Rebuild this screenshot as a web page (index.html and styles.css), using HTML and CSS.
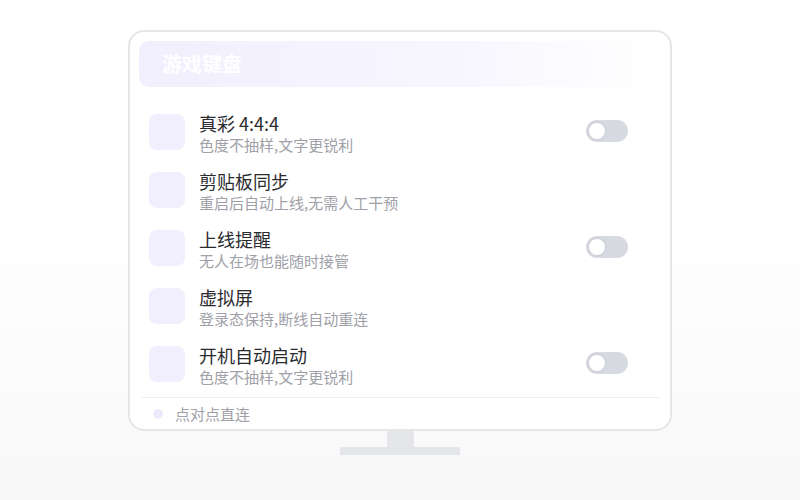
FILE: index.html
```html
<!DOCTYPE html>
<html lang="zh-CN">
<head>
    <meta charset="UTF-8">
    <meta name="viewport" content="width=device-width, initial-scale=1.0">
    <title>游戏键盘</title>
    <link rel="stylesheet" href="styles.css">
</head>
<body>

    <div class="monitor">
        <div class="screen">
            <div class="screen-title">游戏键盘</div>

            <ul class="options">
                <li class="option">
                    <span class="option-icon"></span>
                    <div class="option-text">
                        <div class="option-name">真彩 4:4:4</div>
                        <div class="option-desc">色度不抽样,文字更锐利</div>
                    </div>
                    <span class="switch"></span>
                </li>
                <li class="option">
                    <span class="option-icon"></span>
                    <div class="option-text">
                        <div class="option-name">剪贴板同步</div>
                        <div class="option-desc">重启后自动上线,无需人工干预</div>
                    </div>
                </li>
                <li class="option">
                    <span class="option-icon"></span>
                    <div class="option-text">
                        <div class="option-name">上线提醒</div>
                        <div class="option-desc">无人在场也能随时接管</div>
                    </div>
                    <span class="switch"></span>
                </li>
                <li class="option">
                    <span class="option-icon"></span>
                    <div class="option-text">
                        <div class="option-name">虚拟屏</div>
                        <div class="option-desc">登录态保持,断线自动重连</div>
                    </div>
                </li>
                <li class="option">
                    <span class="option-icon"></span>
                    <div class="option-text">
                        <div class="option-name">开机自动启动</div>
                        <div class="option-desc">色度不抽样,文字更锐利</div>
                    </div>
                    <span class="switch"></span>
                </li>
            </ul>

            <div class="screen-footer">
                <span class="dot"></span>
                <span>点对点直连</span>
            </div>
        </div>
        <div class="neck"></div>
        <div class="base"></div>
    </div>

</body>
</html>
```

FILE: styles.css
```css
html {
    min-height: 100%;
    background: linear-gradient(180deg, #ffffff 45%, #f8f8f9 100%);
}

body {
    font-family: "Noto Sans CJK SC", "Noto Sans", sans-serif;
    margin: 0;
    padding: 0;
}

.monitor {
    display: flex;
    flex-direction: column;
    align-items: center;
    padding-top: 30px;
}

.screen {
    box-sizing: border-box;
    width: 544px;
    height: 401px;
    border: 2px solid #e4e6ea;
    border-radius: 16px;
    background-color: #ffffff;
    padding: 9px 10px 0 9px;
    display: flex;
    flex-direction: column;
}

.screen-title {
    height: 46px;
    border-radius: 10px;
    background: linear-gradient(90deg, #f2effe 0%, #f7f6fe 60%, rgba(255, 255, 255, 0) 100%);
    color: #ffffff;
    font-size: 20px;
    font-weight: bold;
    line-height: 46px;
    padding-left: 23px;
}

.options {
    list-style: none;
    margin: 16px 0 0 0;
    padding: 0;
}

.option {
    height: 58px;
    display: flex;
    align-items: center;
    padding: 0 32px 0 10px;
}

.option-icon {
    width: 36px;
    height: 36px;
    border-radius: 8px;
    background-color: #f1effd;
    flex-shrink: 0;
}

.option-text {
    flex: 1;
    margin-left: 14px;
    margin-top: 2px;
}

.option-name {
    font-size: 18px;
    line-height: 24px;
    color: #2b2b2f;
}

.option-desc {
    font-size: 15px;
    line-height: 20px;
    color: #a0a0a8;
}

.switch {
    position: relative;
    width: 42px;
    height: 22px;
    border-radius: 11px;
    background-color: #d7dae1;
    margin-top: -2px;
}

.switch::after {
    content: "";
    position: absolute;
    left: 1px;
    top: 1px;
    width: 16px;
    height: 16px;
    border-radius: 50%;
    background-color: #ffffff;
    border: 2px solid #d0d3da;
}

.screen-footer {
    margin: 4px 0 0 2px;
    border-top: 1px solid #eeeff2;
    height: 32px;
    display: flex;
    align-items: center;
    padding-left: 12px;
    font-size: 15px;
    color: #a0a0a8;
}

.dot {
    width: 10px;
    height: 10px;
    border-radius: 50%;
    background-color: #eceafc;
    margin-right: 12px;
}

.neck {
    width: 27px;
    height: 16px;
    background-color: #e4e6ea;
}

.base {
    width: 120px;
    height: 8px;
    background-color: #e4e6ea;
}
```
